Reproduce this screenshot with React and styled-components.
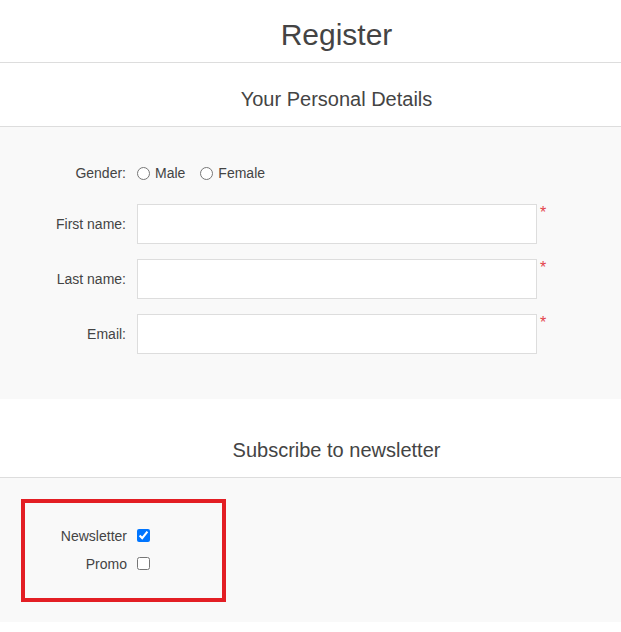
import React from "react";
import styled, { createGlobalStyle } from "styled-components";

const Global = createGlobalStyle`
  html, body { margin: 0; padding: 0; background: #fff; }
  body { font-family: "Liberation Sans", Arial, sans-serif; color: #444; }
`;

const Page = styled.div`
  width: 100%;
`;

const TitleBar = styled.div`
  height: 63px;
  border-bottom: 1px solid #ddd;
  display: flex;
  align-items: center;
  justify-content: center;
  padding: 8px 0 0 52px;
  box-sizing: border-box;
`;

const Title = styled.h1`
  margin: 0;
  font-size: 30px;
  font-weight: normal;
  color: #444;
`;

const SectionHead = styled.div`
  height: ${(p) => p.$h}px;
  border-bottom: 1px solid #ddd;
  display: flex;
  align-items: flex-end;
  justify-content: center;
  padding: 0 0 ${(p) => p.$pb}px 52px;
  box-sizing: border-box;
`;

const SectionTitle = styled.h2`
  margin: 0;
  font-size: 20px;
  font-weight: normal;
  color: #444;
`;

const GrayArea = styled.div`
  background: #f9f9f9;
  padding: ${(p) => p.$pad};
`;

const Row = styled.div`
  display: grid;
  grid-template-columns: 126px 1fr;
  column-gap: 11px;
  align-items: center;
  height: ${(p) => p.$h}px;
  margin-bottom: ${(p) => p.$mb}px;
`;

const Label = styled.label`
  text-align: right;
  font-size: 14px;
  color: #444;
`;

const Field = styled.div`
  display: flex;
  align-items: flex-start;
  height: 100%;
`;

const RadioGroup = styled.div`
  display: flex;
  align-items: center;
  font-size: 14px;
`;

const Radio = styled.input.attrs({ type: "radio" })`
  margin: 0 5px 0 0;
  width: 13px;
  height: 13px;
`;

const RadioText = styled.span`
  margin-right: 15px;
`;

const TextInput = styled.input`
  box-sizing: border-box;
  width: 400px;
  height: 40px;
  border: 1px solid #ddd;
  background: #fff;
  margin: 0;
  padding: 0 10px;
  font-size: 14px;
  outline: none;
`;

const Required = styled.span`
  color: #e4434b;
  font-size: 16px;
  line-height: 1;
  margin-left: 3px;
  margin-top: 1px;
`;

const HighlightBox = styled.div`
  width: 205px;
  height: 103px;
  box-sizing: border-box;
  border: 4px solid #e31e24;
  padding: 22px 0 24px;
  display: flex;
  flex-direction: column;
  gap: 7px;
`;

const CheckRow = styled.div`
  display: grid;
  grid-template-columns: 102px 13px;
  column-gap: 10px;
  align-items: center;
  height: 21px;
`;

const Check = styled.input.attrs({ type: "checkbox" })`
  margin: 0;
  width: 13px;
  height: 13px;
`;

const BottomWhite = styled.div`
  height: 10px;
`;

export default function App() {
  return (
    <>
      <Global />
      <Page>
        <TitleBar>
          <Title>Register</Title>
        </TitleBar>
        <SectionHead $h={64} $pb={15}>
          <SectionTitle>Your Personal Details</SectionTitle>
        </SectionHead>
        <GrayArea $pad="33px 0 45px">
          <Row $h={26} $mb={18}>
            <Label>Gender:</Label>
            <RadioGroup>
              <Radio name="gender" id="m" />
              <RadioText>Male</RadioText>
              <Radio name="gender" id="f" />
              <RadioText>Female</RadioText>
            </RadioGroup>
          </Row>
          <Row $h={40} $mb={15}>
            <Label>First name:</Label>
            <Field>
              <TextInput type="text" />
              <Required>*</Required>
            </Field>
          </Row>
          <Row $h={40} $mb={15}>
            <Label>Last name:</Label>
            <Field>
              <TextInput type="text" />
              <Required>*</Required>
            </Field>
          </Row>
          <Row $h={40} $mb={0}>
            <Label>Email:</Label>
            <Field>
              <TextInput type="email" />
              <Required>*</Required>
            </Field>
          </Row>
        </GrayArea>
        <SectionHead $h={79} $pb={15}>
          <SectionTitle>Subscribe to newsletter</SectionTitle>
        </SectionHead>
        <GrayArea $pad="21px 0 20px 21px">
          <HighlightBox>
            <CheckRow>
              <Label>Newsletter</Label>
              <Check defaultChecked />
            </CheckRow>
            <CheckRow>
              <Label>Promo</Label>
              <Check />
            </CheckRow>
          </HighlightBox>
        </GrayArea>
        <BottomWhite />
      </Page>
    </>
  );
}
